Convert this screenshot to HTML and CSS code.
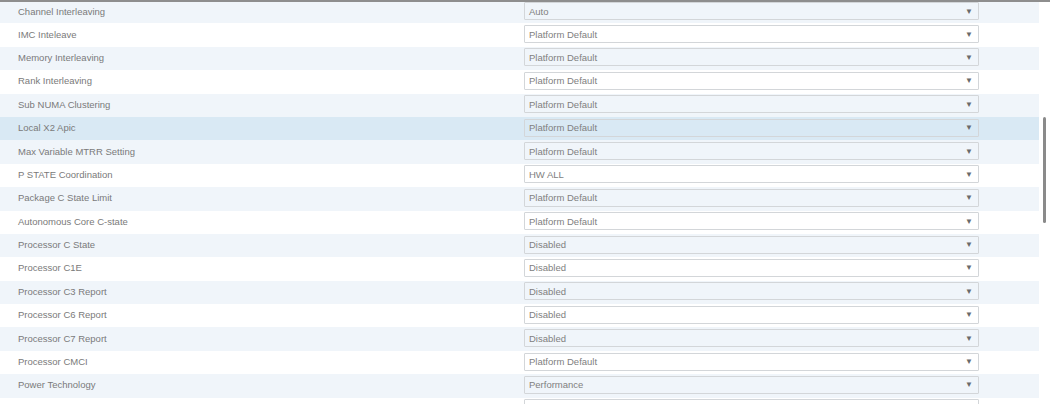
FILE: index.html
```html
<!DOCTYPE html>
<html lang="en">
<head>
    <meta charset="UTF-8">
    <title>BIOS Memory &amp; Processor Settings</title>
    <link rel="stylesheet" href="styles.css">
</head>
<body>
    <div class="page">
        <div class="settings">
            <div class="row"><span class="label">Channel Interleaving</span><div class="select"><span>Auto</span><span class="arrow">▼</span></div></div>
            <div class="row"><span class="label">IMC Inteleave</span><div class="select"><span>Platform Default</span><span class="arrow">▼</span></div></div>
            <div class="row"><span class="label">Memory Interleaving</span><div class="select"><span>Platform Default</span><span class="arrow">▼</span></div></div>
            <div class="row"><span class="label">Rank Interleaving</span><div class="select"><span>Platform Default</span><span class="arrow">▼</span></div></div>
            <div class="row"><span class="label">Sub NUMA Clustering</span><div class="select"><span>Platform Default</span><span class="arrow">▼</span></div></div>
            <div class="row hover"><span class="label">Local X2 Apic</span><div class="select"><span>Platform Default</span><span class="arrow">▼</span></div></div>
            <div class="row"><span class="label">Max Variable MTRR Setting</span><div class="select"><span>Platform Default</span><span class="arrow">▼</span></div></div>
            <div class="row"><span class="label">P STATE Coordination</span><div class="select"><span>HW ALL</span><span class="arrow">▼</span></div></div>
            <div class="row"><span class="label">Package C State Limit</span><div class="select"><span>Platform Default</span><span class="arrow">▼</span></div></div>
            <div class="row"><span class="label">Autonomous Core C-state</span><div class="select"><span>Platform Default</span><span class="arrow">▼</span></div></div>
            <div class="row"><span class="label">Processor C State</span><div class="select"><span>Disabled</span><span class="arrow">▼</span></div></div>
            <div class="row"><span class="label">Processor C1E</span><div class="select"><span>Disabled</span><span class="arrow">▼</span></div></div>
            <div class="row"><span class="label">Processor C3 Report</span><div class="select"><span>Disabled</span><span class="arrow">▼</span></div></div>
            <div class="row"><span class="label">Processor C6 Report</span><div class="select"><span>Disabled</span><span class="arrow">▼</span></div></div>
            <div class="row"><span class="label">Processor C7 Report</span><div class="select"><span>Disabled</span><span class="arrow">▼</span></div></div>
            <div class="row"><span class="label">Processor CMCI</span><div class="select"><span>Platform Default</span><span class="arrow">▼</span></div></div>
            <div class="row"><span class="label">Power Technology</span><div class="select"><span>Performance</span><span class="arrow">▼</span></div></div>
            <div class="row"><span class="label"></span><div class="select"></div></div>
        </div>
        <div class="scroll-track">
            <div class="scroll-thumb"></div>
        </div>
    </div>
</body>
</html>
```

FILE: styles.css
```css
body {
    margin: 0;
    padding: 0;
    background: #fff;
    font-family: 'Liberation Sans', Arial, sans-serif;
    overflow: hidden;
}
.page {
    display: flex;
    height: 404px;
    border-top: 2px solid #8e8e8e;
    box-sizing: border-box;
}
.settings {
    width: 1039px;
    flex-shrink: 0;
}
.row {
    display: flex;
    align-items: center;
    height: 23.4px;
    box-sizing: border-box;
    padding-bottom: 2px;
}
.row:first-child {
    height: 21.4px;
    padding-bottom: 3px;
}
.row:nth-child(odd) {
    background: #f0f5fa;
}
.row.hover {
    background: #d9e9f4;
}
.label {
    width: 524px;
    flex-shrink: 0;
    padding-left: 18px;
    box-sizing: border-box;
    font-size: 9.5px;
    color: #7a7a7a;
}
.select {
    display: flex;
    align-items: center;
    justify-content: space-between;
    width: 455px;
    height: 18px;
    box-sizing: border-box;
    padding: 0 5px 0 4px;
    border: 1px solid #d3d6d9;
    border-radius: 1px;
    font-size: 9.5px;
    color: #808080;
}
.arrow {
    font-size: 8px;
    color: #6a6a6a;
}
.scroll-track {
    flex: 1;
    padding-left: 4px;
}
.scroll-thumb {
    width: 3px;
    height: 106px;
    margin-top: 115px;
    border-radius: 2px;
    background: #8a8a8a;
}
```
